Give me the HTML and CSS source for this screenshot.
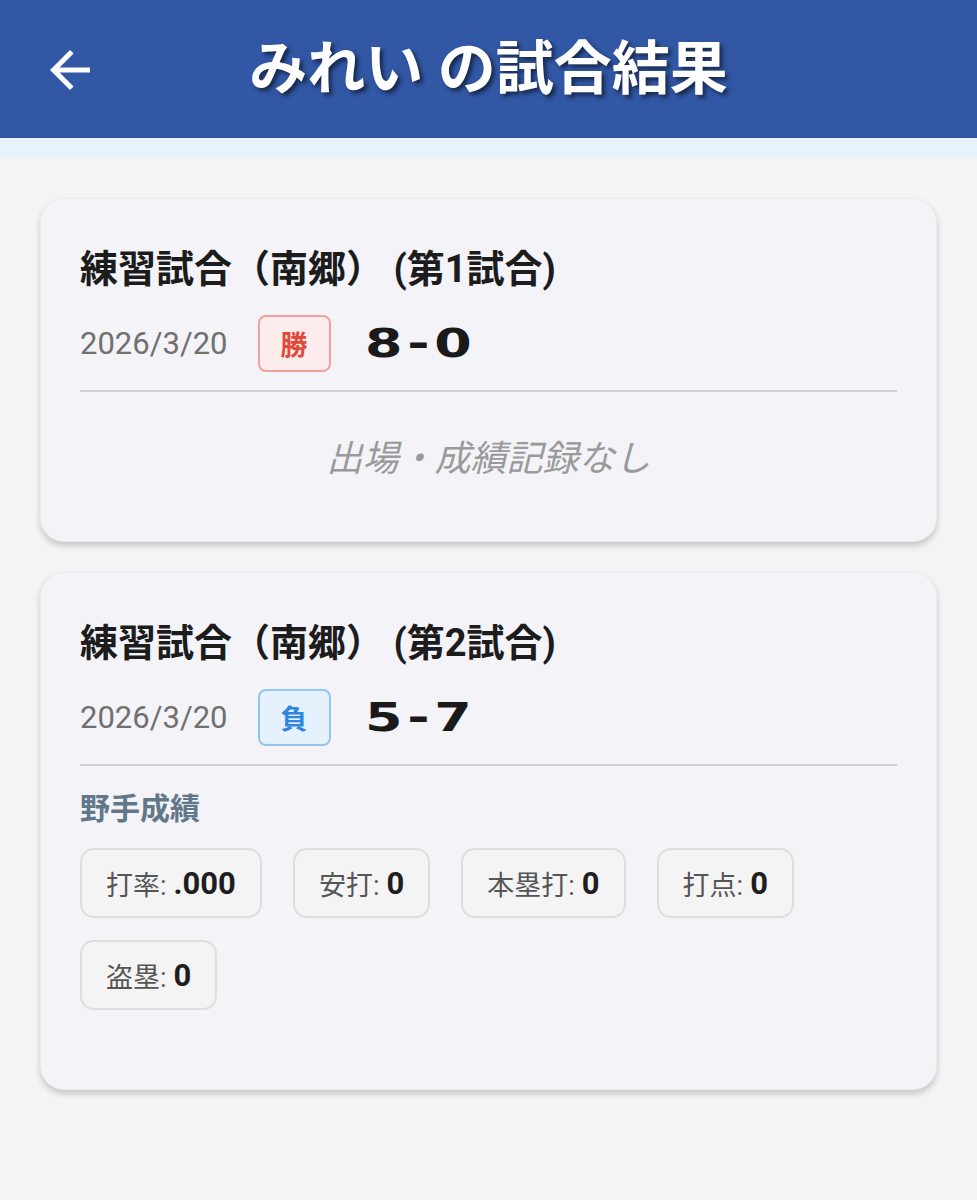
FILE: index.html
```html
<!DOCTYPE html>
<html lang="ja">
<head>
    <meta charset="UTF-8">
    <meta name="viewport" content="width=device-width, initial-scale=1.0">
    <title>みれい の試合結果</title>
    <link rel="stylesheet" href="styles.css">
</head>
<body>
    <header class="app-bar">
        <button class="back-button" aria-label="戻る">
            <svg viewBox="0 0 24 24" width="60" height="60">
                <path d="M20 11H7.83l5.59-5.59L12 4l-8 8 8 8 1.41-1.41L7.83 13H20v-2z" fill="#ffffff"/>
            </svg>
        </button>
        <h1 class="app-title">みれい の試合結果</h1>
        <div></div>
    </header>
    <div class="app-bar-strip"></div>

    <main class="game-list">
        <section class="game-card">
            <h2 class="game-title">練習試合（南郷） (第1試合)</h2>
            <div class="game-info">
                <span class="game-date">2026/3/20</span>
                <span class="result-badge win">勝</span>
                <span class="game-score">8 - 0</span>
            </div>
            <div class="divider"></div>
            <p class="no-record">出場・成績記録なし</p>
        </section>

        <section class="game-card">
            <h2 class="game-title">練習試合（南郷） (第2試合)</h2>
            <div class="game-info">
                <span class="game-date">2026/3/20</span>
                <span class="result-badge lose">負</span>
                <span class="game-score">5 - 7</span>
            </div>
            <div class="divider"></div>
            <div class="stats-block">
                <h3 class="stats-heading">野手成績</h3>
                <div class="stats-chips">
                    <div class="stat-chip">打率: <b>.000</b></div>
                    <div class="stat-chip">安打: <b>0</b></div>
                    <div class="stat-chip">本塁打: <b>0</b></div>
                    <div class="stat-chip">打点: <b>0</b></div>
                    <div class="stat-chip">盗塁: <b>0</b></div>
                </div>
            </div>
        </section>
    </main>
</body>
</html>
```

FILE: styles.css
```css
body {
    margin: 0;
    background-color: #f4f4f4;
    font-family: Roboto, "Noto Sans CJK JP", sans-serif;
    color: #1c1c1c;
}
.app-bar {
    display: grid;
    grid-template-columns: 60px 1fr 60px;
    align-items: center;
    height: 138px;
    padding: 0 40px;
    background-color: #3157a5;
}
.back-button {
    display: flex;
    padding: 0;
    border: none;
    background: none;
    width: 60px;
    height: 60px;
    margin-top: 2px;
}
.app-title {
    margin: 0;
    text-align: center;
    color: #ffffff;
    font-size: 58px;
    font-weight: 700;
    line-height: 1;
    text-shadow: 3px 3px 4px rgba(0, 0, 0, 0.55);
}
.app-bar-strip {
    height: 20px;
    background-color: #e8f2fb;
}
.game-list {
    display: flex;
    flex-direction: column;
    gap: 30px;
    padding: 40px;
}
.game-card {
    background-color: #f3f3f8;
    border: 1px solid #ebebf0;
    border-radius: 24px;
    padding: 47px 39px 39px;
    box-shadow: 0 4px 6px rgba(0, 0, 0, 0.18);
}
.game-title {
    margin: 0;
    font-size: 38px;
    font-weight: 700;
    line-height: 46px;
}
.game-info {
    display: flex;
    align-items: center;
    margin-top: 23px;
}
.game-date {
    font-size: 31px;
    color: #707070;
    margin-right: 30px;
}
.result-badge {
    display: flex;
    align-items: center;
    justify-content: center;
    width: 69px;
    height: 53px;
    border: 2px solid;
    border-radius: 8px;
    font-size: 27px;
    font-weight: 700;
}
.result-badge.win {
    color: #e04a3c;
    background-color: #fcecec;
    border-color: #efa2a0;
}
.result-badge.lose {
    color: #2f86e0;
    background-color: #e5f1fd;
    border-color: #93c5f0;
}
.game-score {
    display: inline-block;
    margin-left: 34px;
    font-family: "DejaVu Sans", sans-serif;
    font-size: 39px;
    font-weight: 700;
    word-spacing: -0.26em;
    color: #1a1a1a;
    transform: scaleX(1.38);
    transform-origin: left center;
}
.divider {
    height: 2px;
    margin-top: 18px;
    background-color: #cfd0d8;
}
.no-record {
    margin: 0;
    padding: 45px 0 21px;
    text-align: center;
    font-size: 36px;
    line-height: 44px;
    font-style: italic;
    color: #9a9a9a;
}
.stats-block {
    padding-bottom: 40px;
}
.stats-heading {
    margin: 23px 0 0;
    font-size: 30px;
    line-height: 40px;
    font-weight: 700;
    color: #607887;
}
.stats-chips {
    display: flex;
    flex-wrap: wrap;
    gap: 22px 31px;
    margin-top: 19px;
}
.stat-chip {
    display: flex;
    align-items: center;
    gap: 7px;
    height: 66px;
    padding: 0 24px;
    background-color: #f4f4f4;
    border: 2px solid #dedede;
    border-radius: 14px;
    font-size: 27px;
    color: #555555;
}
.stat-chip b {
    font-size: 31px;
    color: #1e1e1e;
}
```
